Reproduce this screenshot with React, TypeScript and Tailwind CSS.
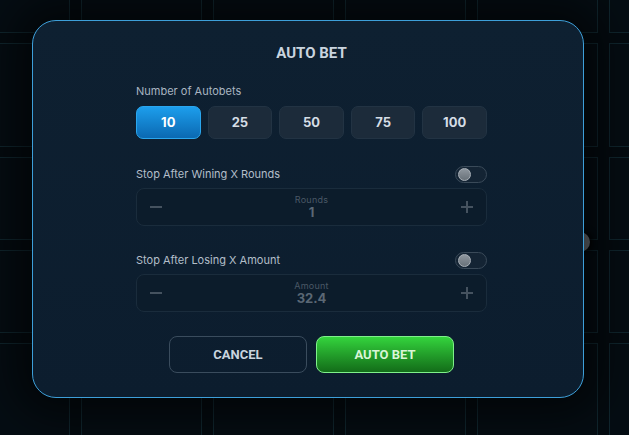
import { useState } from "react";

const COLS = [121, 121, 121, 121, 121, 121];
const ROWS = [100, 104, 83, 83, 100];

function Toggle({ on, onChange }: { on: boolean; onChange: () => void }) {
  return (
    <button
      onClick={onChange}
      className="w-[32px] h-[17px] rounded-full border border-[#3a4a59] bg-[#142434] flex items-center px-[2px]"
    >
      <span
        className={`w-[13px] h-[13px] rounded-full border border-[#aab1b8] bg-gradient-to-b from-[#8e969e] to-[#69727a] ${
          on ? "ml-auto" : ""
        }`}
      />
    </button>
  );
}

function Stepper({ label, value }: { label: string; value: string }) {
  return (
    <div className="h-[38px] rounded-[8px] border border-[#1a2c3c] bg-[#0c1c2b] flex items-center justify-between px-[13px]">
      <span className="w-[12px] h-[2px] bg-[#45525f]" />
      <div className="flex flex-col items-center">
        <span className="text-[9px] leading-[10px] text-[#4a5866] tracking-wide">{label}</span>
        <span className="text-[13px] leading-[13px] font-bold text-[#5a6774] mt-[1px]">{value}</span>
      </div>
      <span className="relative w-[12px] h-[12px]">
        <span className="absolute left-0 top-[5px] w-[12px] h-[2px] bg-[#45525f]" />
        <span className="absolute top-0 left-[5px] w-[2px] h-[12px] bg-[#45525f]" />
      </span>
    </div>
  );
}

export default function App() {
  const [count, setCount] = useState(10);
  const [stopWin, setStopWin] = useState(false);
  const [stopLoss, setStopLoss] = useState(false);

  return (
    <div
      className="relative w-[629px] h-[435px] overflow-hidden bg-[#040b10]"
      style={{ fontFamily: "Inter, 'Noto Sans', sans-serif" }}
    >
      {/* game board behind the dialog */}
      <div className="absolute left-[-51px] top-[-67px] grid grid-cols-[repeat(6,121px)] gap-x-[11px] gap-y-[10px]">
        {ROWS.map((h, r) =>
          COLS.map((_, c) => (
            <div
              key={`${r}-${c}`}
              className="border border-[#10262e] bg-[#050d13]"
              style={{ height: h }}
            />
          ))
        )}
      </div>
      <div className="absolute left-[570px] top-[232px] w-[20px] h-[20px] rounded-full bg-[#6c7277] shadow-[0_0_6px_2px_rgba(0,0,0,0.9)]" />

      {/* dialog */}
      <div className="absolute left-[32px] top-[20px] w-[552px] h-[378px] rounded-[24px] border border-[#3d9fd9] bg-gradient-to-b from-[#0e2031] to-[#0c1d2e] shadow-[0_0_40px_20px_rgba(0,0,0,0.55)] flex flex-col items-center pl-[7px]">
        <h2
          className="mt-[25px] text-[15px] font-bold text-[#c9d4df] leading-none"
          style={{ fontFamily: "Roboto, sans-serif" }}
        >
          AUTO BET
        </h2>

        <div className="w-[351px] mt-[25px]">
          <p className="text-[11px] text-[#a9b5c1] leading-none">Number of Autobets</p>
          <div className="grid grid-cols-5 gap-[7px] mt-[9px]">
            {[10, 25, 50, 75, 100].map((n) => (
              <button
                key={n}
                onClick={() => setCount(n)}
                className={`h-[33px] rounded-[7px] text-[13px] font-bold ${
                  count === n
                    ? "bg-gradient-to-b from-[#1d9eec] to-[#0b69b2] border border-[#2aa6ee] text-white"
                    : "bg-[#1c2b3a] border border-[#223343] text-[#d5dde5]"
                }`}
              >
                {n}
              </button>
            ))}
          </div>

          <div className="flex items-center justify-between mt-[27px]">
            <span className="text-[11px] text-[#b3bec9]">Stop After Wining X Rounds</span>
            <Toggle on={stopWin} onChange={() => setStopWin(!stopWin)} />
          </div>
          <div className="mt-[5px]">
            <Stepper label="Rounds" value="1" />
          </div>

          <div className="flex items-center justify-between mt-[26px]">
            <span className="text-[11px] text-[#b3bec9]">Stop After Losing X Amount</span>
            <Toggle on={stopLoss} onChange={() => setStopLoss(!stopLoss)} />
          </div>
          <div className="mt-[5px]">
            <Stepper label="Amount" value="32.4" />
          </div>
        </div>

        <div
          className="flex gap-[9px] mt-[24px]"
          style={{ fontFamily: "Roboto, sans-serif" }}
        >
          <button className="w-[138px] h-[37px] rounded-[8px] border border-[#3a4c5d] text-[13px] font-bold text-[#c9d4df]">
            CANCEL
          </button>
          <button className="w-[138px] h-[37px] rounded-[8px] border border-[#7ff08a] bg-gradient-to-b from-[#34d43d] to-[#136d19] text-[13px] font-bold text-[#d9f5d6]">
            AUTO BET
          </button>
        </div>
      </div>
    </div>
  );
}
